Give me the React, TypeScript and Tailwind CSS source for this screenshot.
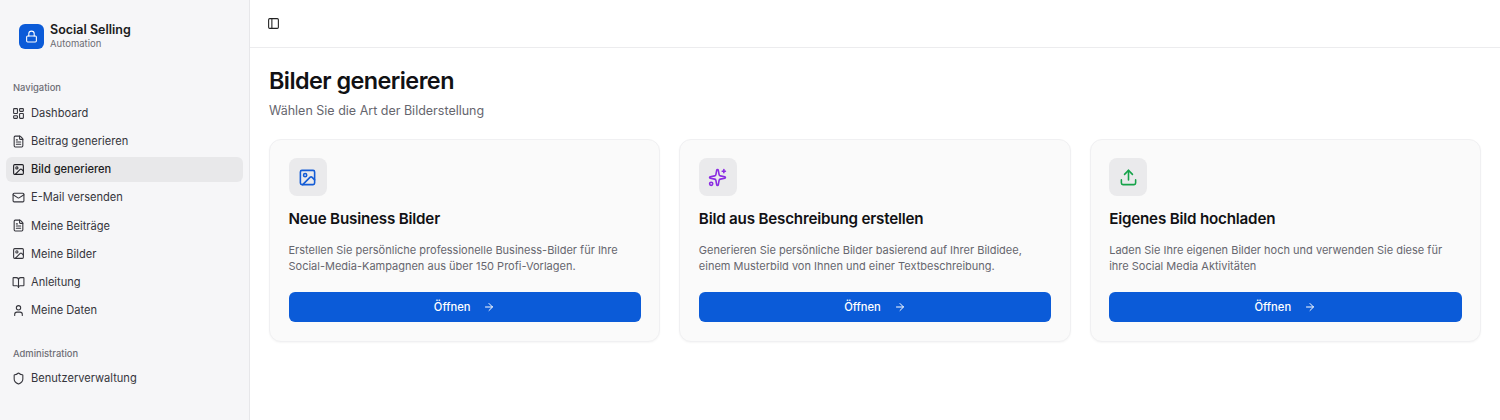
import {
  ArrowRight,
  BookOpen,
  FileText,
  Image,
  LayoutDashboard,
  Lock,
  Mail,
  PanelLeft,
  Shield,
  Sparkles,
  Upload,
  User,
} from 'lucide-react';

const navItems = [
  { label: 'Dashboard', icon: LayoutDashboard },
  { label: 'Beitrag generieren', icon: FileText },
  { label: 'Bild generieren', icon: Image, active: true },
  { label: 'E-Mail versenden', icon: Mail },
  { label: 'Meine Beiträge', icon: FileText },
  { label: 'Meine Bilder', icon: Image },
  { label: 'Anleitung', icon: BookOpen },
  { label: 'Meine Daten', icon: User },
];

const cards = [
  {
    title: 'Neue Business Bilder',
    text: 'Erstellen Sie persönliche professionelle Business-Bilder für Ihre Social-Media-Kampagnen aus über 150 Profi-Vorlagen.',
    icon: Image,
    color: 'text-[#155dd6]',
  },
  {
    title: 'Bild aus Beschreibung erstellen',
    text: 'Generieren Sie persönliche Bilder basierend auf Ihrer Bildidee, einem Musterbild von Ihnen und einer Textbeschreibung.',
    icon: Sparkles,
    color: 'text-[#8a2be2]',
  },
  {
    title: 'Eigenes Bild hochladen',
    text: 'Laden Sie Ihre eigenen Bilder hoch und verwenden Sie diese für ihre Social Media Aktivitäten',
    icon: Upload,
    color: 'text-[#16a34a]',
  },
];

function NavRow({ label, icon: Icon, active }: { label: string; icon: typeof Image; active?: boolean }) {
  return (
    <div
      className={`flex h-[25px] items-center gap-[6px] rounded-md px-[6px] text-[11.1px] ${
        active ? 'bg-[#e8e8ea] font-medium text-[#1c1c22]' : 'text-[#35353c]'
      }`}
    >
      <Icon className="h-[13px] w-[13px] shrink-0" strokeWidth={2} />
      <span>{label}</span>
    </div>
  );
}

export default function App() {
  return (
    <div className="flex h-[420px] w-[1500px] overflow-hidden bg-white font-['Inter',sans-serif] text-[#111114]">
      <aside className="w-[250px] shrink-0 border-r border-[#e7e7ea] bg-[#f6f6f8]">
        <div className="flex items-center gap-[6px] pl-[19px] pt-[22px]">
          <div className="flex h-[25px] w-[25px] items-center justify-center rounded-md bg-[#0b5bd8] text-white">
            <Lock className="h-[13px] w-[13px]" />
          </div>
          <div>
            <div className="text-[12.5px] font-semibold leading-[15px] text-[#1b1b20]">Social Selling</div>
            <div className="text-[9.5px] leading-[14px] text-[#6d6d75]">Automation</div>
          </div>
        </div>
        <div className="px-[6px] pt-[30px]">
          <div className="px-[7px] text-[9.4px] font-medium leading-[14px] text-[#6d6d75]">Navigation</div>
          <div className="mt-[6px] flex flex-col gap-[3.1px]">
            {navItems.map((item) => (
              <NavRow key={item.label} {...item} />
            ))}
          </div>
          <div className="mt-[24px] px-[7px] text-[9.4px] font-medium leading-[14px] text-[#6d6d75]">Administration</div>
          <div className="mt-[5px]">
            <NavRow label="Benutzerverwaltung" icon={Shield} />
          </div>
        </div>
      </aside>
      <main className="min-w-0 flex-1">
        <header className="flex h-[48px] items-center border-b border-[#ececee] pl-[17px]">
          <PanelLeft className="h-[13px] w-[13px] text-[#222]" />
        </header>
        <div className="px-[19px] pt-[18px]">
          <h1 className="text-[23.4px] font-semibold leading-[30px] tracking-[-0.55px] text-[#111114]">Bilder generieren</h1>
          <p className="mt-[6px] text-[12.5px] leading-[18px] text-[#66666e]">Wählen Sie die Art der Bilderstellung</p>
          <div className="mt-[19px] grid grid-cols-3 gap-[19px]">
            {cards.map((card) => (
              <div key={card.title} className="rounded-xl border border-[#f0f0f2] bg-[#fafafa] px-[18.5px] pb-[19px] pt-[18px] shadow-[0_1px_2px_rgba(0,0,0,0.04)]">
                <div className="flex h-[38px] w-[38px] items-center justify-center rounded-lg bg-[#eaeaec]">
                  <card.icon className={`h-[19px] w-[19px] ${card.color}`} />
                </div>
                <h2 className="mt-[11px] text-[15.2px] font-semibold leading-[24px] tracking-[-0.2px] text-[#111114]">{card.title}</h2>
                <p className="mt-[11px] h-[32px] text-[11px] leading-[16px] text-[#66666e]">{card.text}</p>
                <button className="mt-[18px] flex h-[30px] w-full items-center justify-center gap-[13px] rounded-md bg-[#0b5bd8] text-[11.2px] font-medium text-white">
                  <span>Öffnen</span>
                  <ArrowRight className="h-[12px] w-[12px]" />
                </button>
              </div>
            ))}
          </div>
        </div>
      </main>
    </div>
  );
}
